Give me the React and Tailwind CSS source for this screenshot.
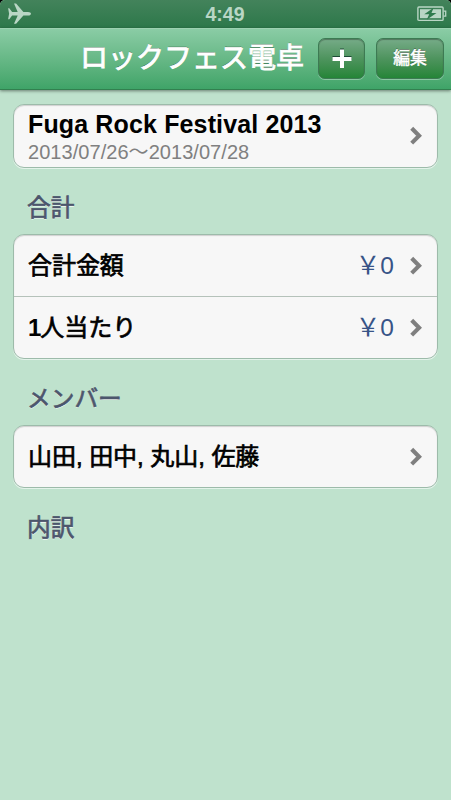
function Airplane() {
  return (
    <svg className="block h-[22px] w-[24px]" viewBox="0 0 24 22" fill="#b9d6c5">
      <path d="M0.1 5.2h1.2l2.8 3.7h5.6L6 0.6h2.100L15.400 8.900h4.600c2 0 3 1 3 1.800s-1 1.800-3 1.800h-4.600L8.100 20.800H6L9.700 12.500H4.100L1.300 16.200H0.100L1.100 10.700z" />
    </svg>
  );
}

function Battery() {
  return (
    <svg className="block h-[16px] w-[30px]" viewBox="0 0 30 16" fill="none">
      <rect x="0.9" y="1" width="25.2" height="13.4" rx="1" stroke="#b9d6c5" strokeWidth="1.4" />
      <rect x="3" y="3.2" width="21" height="9" fill="#b9d6c5" />
      <path d="M26.5 5.2h2.2v5h-2.2" stroke="#b9d6c5" strokeWidth="1.3" />
      <path d="M16.6 1.7 7.2 8.2h5l-2.5 5.6 9.8-6.7h-5z" fill="#2f7b4e" />
    </svg>
  );
}

function Chevron() {
  return (
    <svg className="block h-[20px] w-[14px] shrink-0" viewBox="0 0 14 20" fill="none">
      <path d="M2.7 2.3 10.1 9.7l-7.4 7.4" stroke="#7f7f7f" strokeWidth="4.1" />
    </svg>
  );
}

function Card({ children }) {
  return (
    <div className="mx-[13px] overflow-hidden rounded-[11px] border border-[#9dbbaa] bg-[#f7f7f7] shadow-[0_1px_0_#e3f3ea,inset_0_1px_1px_rgba(0,0,0,0.16)]">
      {children}
    </div>
  );
}

function Row({ label, value }) {
  return (
    <div className="flex h-[61px] items-center pl-[14px] pr-[14px]">
      <span className="flex-1 text-[24px] leading-[34px] tracking-[-0.05px] text-black [-webkit-text-stroke:0.7px_currentColor]">
        {label}
      </span>
      {value && <span className="mr-[15px] text-[24.5px] leading-[34px] text-[#385487]">{value}</span>}
      <Chevron />
    </div>
  );
}

function SectionTitle({ children }) {
  return (
    <h2 className="px-[27px] text-[23.7px] leading-[34px] font-normal text-[#4c566c] [-webkit-text-stroke:0.7px_currentColor] [text-shadow:0_1px_0_#f3faf6]">
      {children}
    </h2>
  );
}

function NavButton({ children, className }) {
  return (
    <button
      className={
        "flex h-[41px] items-center justify-center rounded-[7px] border border-[#3d7a53] bg-linear-to-b from-[#76ab88] via-[#4e945e] to-[#238537] text-white shadow-[0_1px_0_rgba(255,255,255,0.35),inset_0_1px_1px_rgba(0,0,0,0.3)] " +
        className
      }
    >
      {children}
    </button>
  );
}

export default function App() {
  return (
    <div className="h-[800px] w-[451px] overflow-hidden bg-black font-['Liberation_Sans','Noto_Sans_CJK_JP',sans-serif]">
      <div className="h-full overflow-hidden rounded-t-[5px] bg-[#bfe2cd]">
        <div className="flex h-[28px] items-center justify-between bg-linear-to-b from-[#43835b] to-[#2c784a] pl-[8px] pr-[4px]">
          <div className="w-[30px]">
            <Airplane />
          </div>
          <span className="mr-[5px] text-[19.5px] leading-[28px] font-bold text-[#b9d6c5]">4:49</span>
          <Battery />
        </div>
        <div className="flex h-[62px] items-center border-t border-b border-t-[#9bd2b1] border-b-[#32804f] bg-linear-to-b from-[#8accA5] to-[#3fa468] pl-[80px] pr-[7px] pb-px shadow-[0_1px_3px_rgba(0,0,0,0.45)]">
          <h1 className="w-[238px] text-[28px] leading-[40px] font-normal whitespace-nowrap text-white [-webkit-text-stroke:0.9px_currentColor] [text-shadow:0_-1px_0_rgba(0,0,0,0.5)]">
            ロックフェス電卓
          </h1>
          <NavButton className="w-[47px]">
            <svg className="block h-[22px] w-[20px]" viewBox="0 0 20 22">
              <path d="M8 0.500h4v7.500h7.500v4H12v7H8v-7H.5V8H8z" fill="#1f4a36" />
              <path d="M8 1.500h4V9h7.500v4H12v7H8v-7H.5V9H8z" fill="#fff" />
            </svg>
          </NavButton>
          <NavButton className="ml-[11px] w-[68px] text-[16.8px] leading-[24px] font-normal [-webkit-text-stroke:0.5px_currentColor] [text-shadow:0_-1px_0_rgba(0,0,0,0.5)]">
            編集
          </NavButton>
        </div>
        <main className="pt-[14px]">
          <Card>
            <div className="flex h-[62px] items-center pl-[14px] pr-[14px]">
              <div className="flex-1 pt-[4px]">
                <p className="text-[25px] leading-[29px] font-bold tracking-[0.14px] text-black">Fuga Rock Festival 2013</p>
                <p className="text-[20px] leading-[27px] tracking-[0.05px] text-[#808080]">2013/07/26～2013/07/28</p>
              </div>
              <Chevron />
            </div>
          </Card>
          <div className="pt-[23px] pb-[9px]">
            <SectionTitle>合計</SectionTitle>
          </div>
          <Card>
            <Row label="合計金額" value="￥0" />
            <div className="h-px bg-[#b5c2ba]" />
            <Row
              label={
                <>
                  <span className="-mr-px font-bold [-webkit-text-stroke:0px]">1</span>人当たり
                </>
              }
              value="￥0"
            />
          </Card>
          <div className="pt-[23px] pb-[9px]">
            <SectionTitle>メンバー</SectionTitle>
          </div>
          <Card>
            <Row label="山田, 田中, 丸山, 佐藤" />
          </Card>
          <div className="pt-[23px]">
            <SectionTitle>内訳</SectionTitle>
          </div>
        </main>
      </div>
    </div>
  );
}
